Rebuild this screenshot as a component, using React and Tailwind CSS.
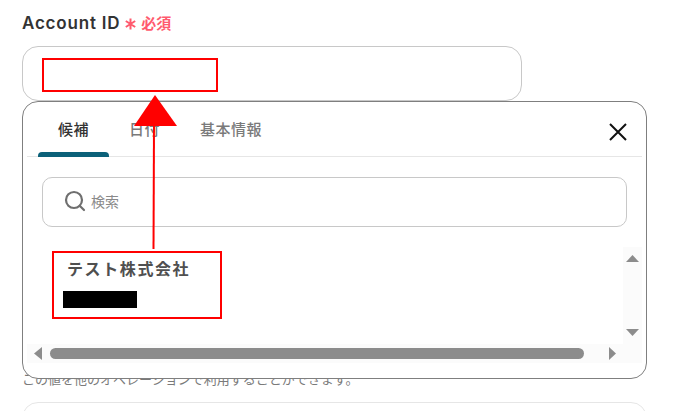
import { Search } from 'lucide-react';

const font = { fontFamily: 'Inter, "Noto Sans CJK JP", sans-serif' };

function Tab({ label, active }) {
  return (
    <div className={`relative w-[71px] h-[55px] flex items-center justify-center pt-[2px] text-[15px] font-medium tracking-[0.5px] ${active ? 'text-[#333333]' : 'text-[#7a7a7a]'}`}>
      {label}
      {active && <div className="absolute left-0 right-0 bottom-0 h-[5px] rounded-t-[4px] bg-[#0b6179]" />}
    </div>
  );
}

function SearchPopup() {
  return (
    <div className="absolute left-[22px] top-[101px] w-[625px] h-[278px] bg-white border border-[#7f7f7f] rounded-[16px] px-[4px] z-10">
      {/* Tabs */}
      <div className="flex items-center h-[55px] border-b border-[#e6e6e6] pl-[11px] pr-[15px]">
        <Tab label="候補" active />
        <Tab label="日付" />
        <div className="ml-[20px] pt-[2px] text-[15px] font-medium tracking-[0.5px] text-[#7a7a7a]">基本情報</div>
        <svg className="ml-auto mt-[5px]" width="18" height="18" viewBox="0 0 18 18">
          <path d="M1 1 L17 17 M17 1 L1 17" stroke="#111111" strokeWidth="2" fill="none" />
        </svg>
      </div>

      {/* Search */}
      <div className="mx-[15px] mt-[20px] h-[50px] border border-[#c8c8c8] rounded-[10px] flex items-center pl-[20px] gap-[4px]">
        <Search className="mb-[2px] text-[#6f6f6f]" size={24} strokeWidth={2.2} />
        <span className="mb-[2px] text-[14px] text-[#8a8a8a]">検索</span>
      </div>

      {/* Results */}
      <div className="relative mt-[20px] h-[131px]">
        <div className="absolute left-[40px] top-[10px] text-[16px] font-semibold tracking-[1.6px] text-[#4f4f4f]">テスト株式会社</div>
        <div className="absolute left-[36px] top-[44px] w-[74px] h-[17px] bg-black" />

        {/* Vertical scrollbar */}
        <div className="absolute right-0 top-0 w-[19px] h-[97px] bg-[#fbfbfb] flex flex-col items-center justify-between pt-[8px] pb-[8px]">
          <svg width="13" height="7" viewBox="0 0 13 7"><path d="M6.5 0 L13 7 L0 7 Z" fill="#8c8c8c" /></svg>
          <svg width="13" height="7" viewBox="0 0 13 7"><path d="M0 0 L13 0 L6.5 7 Z" fill="#8c8c8c" /></svg>
        </div>

        {/* Horizontal scrollbar */}
        <div className="absolute left-0 right-0 top-[97px] h-[19px] bg-[#fbfbfb] flex items-center pl-[7px]">
          <svg width="8" height="13" viewBox="0 0 8 13"><path d="M8 0 L8 13 L0 6.5 Z" fill="#8c8c8c" /></svg>
          <div className="ml-[8px] w-[534px] h-[11px] rounded-full bg-[#8c8c8c]" />
          <svg className="ml-[25px]" width="7" height="13" viewBox="0 0 7 13"><path d="M0 0 L7 6.5 L0 13 Z" fill="#8c8c8c" /></svg>
        </div>
      </div>
    </div>
  );
}

function Annotations() {
  return (
    <>
      <div className="absolute left-[42px] top-[58px] w-[176px] h-[34px] border-2 border-[#ff0000] z-20" />
      <div className="absolute left-[52px] top-[251px] w-[170px] h-[68px] border-2 border-[#ff0000] z-20" />
      <svg className="absolute left-[130px] top-[90px] z-20" width="50" height="162" viewBox="0 0 50 162">
        <path d="M24 35 L23.5 159" stroke="#ff0000" strokeWidth="2" fill="none" />
        <path d="M25 5 L47 36 L4 36 Z" fill="#ff0000" />
      </svg>
    </>
  );
}

export default function App() {
  return (
    <div className="relative w-[683px] h-[411px] overflow-hidden bg-white px-[22px] pt-[13px]" style={font}>
      <div className="flex items-center h-[22px]">
        <span className="text-[17px] font-semibold tracking-[0.8px] text-[#333333]">Account ID</span>
        <svg className="ml-[5px]" width="11" height="12" viewBox="0 0 11 12">
          <path d="M5.5 0.5 V11.5 M0.8 3 L10.2 9 M10.2 3 L0.8 9" stroke="#ff5a6e" strokeWidth="2" fill="none" />
        </svg>
        <span className="ml-[5px] text-[15px] font-semibold text-[#ff5a6e]">必須</span>
      </div>

      <div className="mt-[11px] w-[500px] h-[55px] bg-white border border-[#c8c8c8] rounded-[16px]" />

      <p className="mt-[269px] text-[13px] leading-[18px] text-[#7a7a7a]">この値を他のオペレーションで利用することができます。</p>

      <div className="mt-[14px] w-[625px] h-[50px] border border-[#e6e6e6] rounded-[16px]" />

      <SearchPopup />
      <Annotations />
    </div>
  );
}
